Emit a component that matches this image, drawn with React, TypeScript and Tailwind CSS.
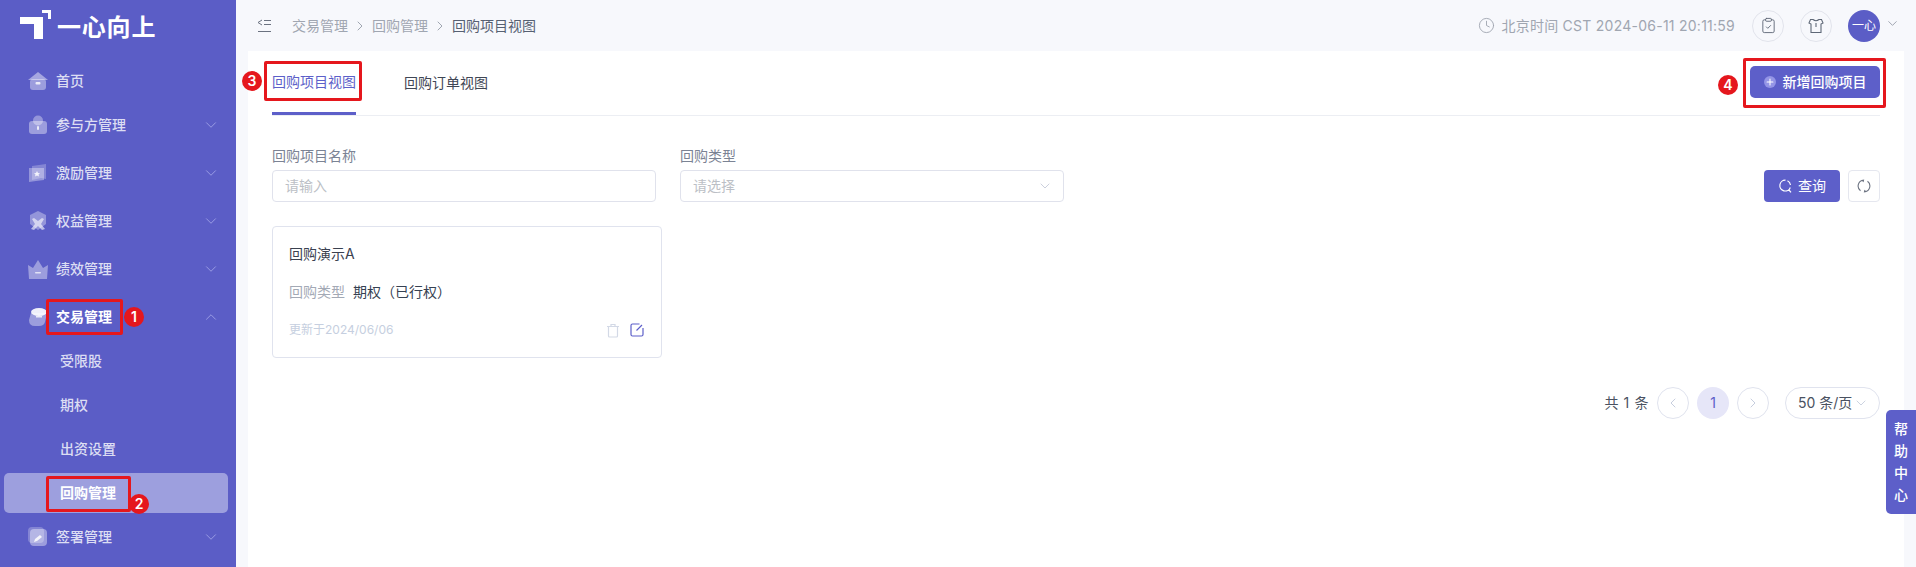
import { ChevronDown, ChevronLeft, ChevronRight, ChevronUp, ClipboardCheck, Clock, Plus } from "lucide-react";
import type { ReactNode } from "react";

const icons: Record<string, ReactNode> = {
  home: (
    <>
      <path d="M10 1 0 9h20z" fill="#fff" opacity=".45" />
      <rect x="2" y="8" width="16" height="11" rx="3" fill="#fff" opacity=".4" />
      <rect x="7.500" y="11" width="5" height="2.500" rx="1" fill="#fff" opacity=".8" />
    </>
  ),
  bag: (
    <>
      <circle cx="10" cy="5.500" r="5" fill="#fff" opacity=".35" />
      <rect x="1" y="6" width="18" height="13" rx="3" fill="#fff" opacity=".4" />
      <rect x="9" y="11" width="2" height="4" rx="1" fill="#fff" opacity=".8" />
    </>
  ),
  flag: (
    <>
      <path d="M4 3 18 1v15l-5-1-9 2z" fill="#fff" opacity=".25" />
      <path d="M1 5h15v12l-8 1-7 1z" fill="#fff" opacity=".35" />
      <path d="m9 8 1 2 2 .2-1.500 1.400.5 2-2-1-2 1 .5-2L6 10.200l2-.2z" fill="#fff" opacity=".85" />
    </>
  ),
  shield: (
    <>
      <path d="m10 0 8 4v9l-8 6-8-6V4z" fill="#fff" opacity=".35" />
      <path d="m6 7 4 3 4-3 2 1-3 5 4 5-3 1-4-4-4 4-3-1 4-5-3-5z" fill="#fff" opacity=".6" />
    </>
  ),
  crown: (
    <>
      <path d="m0 6 5 3 5-8 5 8 5-3-1 14H1z" fill="#fff" opacity=".4" />
      <rect x="7" y="13" width="6" height="1.500" rx=".7" fill="#fff" opacity=".7" />
    </>
  ),
  cup: (
    <>
      <ellipse cx="11" cy="5" rx="8" ry="4" fill="#fff" opacity=".9" />
      <path d="M3 6h16l-2 9q-1 4-6 4H7q-6 0-6-6z" fill="#fff" opacity=".4" />
      <rect x="8" y="9" width="6" height="1.500" fill="#fff" opacity=".8" />
    </>
  ),
  sign: (
    <>
      <rect x="0" y="0" width="16" height="16" rx="4" fill="#fff" opacity=".25" />
      <rect x="2" y="2" width="17" height="17" rx="4" fill="#fff" opacity=".4" />
      <path d="m6 15 1-3 5-4 2 2-5 4z" fill="#fff" opacity=".85" />
    </>
  ),
};

const MenuItem = ({ icon, label, expanded, current }: { icon: string; label: string; expanded?: boolean; current?: boolean }) => (
  <div className="flex h-12 items-center pl-7 pr-[16px]">
    <svg viewBox="0 0 20 20" className="mr-2 h-5 w-5 shrink-0">
      {icons[icon]}
    </svg>
    <span className={current ? "flex-1 text-sm font-semibold text-white" : "flex-1 text-sm font-medium text-[#dcddf3]"}>{label}</span>
    {expanded ? <ChevronUp className="h-[18px] w-[18px] text-[#9a9ce4]" strokeWidth={1.300} /> : <ChevronDown className="h-[18px] w-[18px] text-[#9a9ce4]" strokeWidth={1.300} />}
  </div>
);

const SubItem = ({ label, active }: { label: string; active?: boolean }) => (
  <div className={active ? "ml-1 mr-2 flex h-10 items-center rounded-[5px] bg-[#9d9fde] pl-[56px] text-sm font-semibold text-white" : "ml-1 mr-2 flex h-10 items-center pl-[56px] text-sm font-medium text-[#dcddf3]"}>{label}</div>
);

const Sidebar = () => (
  <aside className="flex w-[236px] shrink-0 flex-col bg-[#5b5dc6]">
    <div className="flex h-[57px] items-start pl-5 pt-[9px]">
      <svg viewBox="0 0 32 30" className="h-[30px] w-8 shrink-0">
        <path d="M0 8h23v22h-9V15H0z" fill="#fff" />
        <path d="M22 1h9v9h-3V4h-6z" fill="#fff" />
      </svg>
      <span className="ml-[5px] mt-[5px] text-2xl leading-[28px] font-bold tracking-[0.8px] text-white">一心向上</span>
    </div>
    <div className="mt-[4px] flex flex-col">
      <div className="flex h-10 items-center pl-7">
        <svg viewBox="0 0 20 20" className="mr-2 h-5 w-5 shrink-0">
          {icons.home}
        </svg>
        <span className="text-sm font-medium text-[#dcddf3]">首页</span>
      </div>
      <MenuItem icon="bag" label="参与方管理" />
      <MenuItem icon="flag" label="激励管理" />
      <MenuItem icon="shield" label="权益管理" />
      <MenuItem icon="crown" label="绩效管理" />
      <MenuItem icon="cup" label="交易管理" expanded current />
      <div className="flex flex-col gap-1">
        <SubItem label="受限股" />
        <SubItem label="期权" />
        <SubItem label="出资设置" />
        <SubItem label="回购管理" active />
      </div>
      <MenuItem icon="sign" label="签署管理" />
    </div>
  </aside>
);

const Header = () => (
  <header className="flex h-[51px] shrink-0 items-center pl-[21px] pr-4">
    <svg viewBox="0 0 15 14" className="h-[14px] w-[15px] fill-none stroke-[#6b7280]" strokeWidth="1">
      <path d="M5 1 1 3.500 5 6M7 1.500h7M7 5.500h7M1 12.500h13" />
    </svg>
    <div className="ml-5 flex items-center text-sm text-[#a0a6b1]">
      <span>交易管理</span>
      <ChevronRight className="mx-1 h-4 w-4" strokeWidth={1.500} />
      <span>回购管理</span>
      <ChevronRight className="mx-1 h-4 w-4" strokeWidth={1.500} />
      <span className="text-[#566072]">回购项目视图</span>
    </div>
    <div className="ml-auto flex items-center text-sm text-[#a0a6b1]">
      <Clock className="mr-[6px] h-[17px] w-[17px]" strokeWidth={1.300} />
      <span className="tracking-[0.25px]">北京时间 CST 2024-06-11 20:11:59</span>
    </div>
    <div className="ml-[17px] flex h-8 w-8 items-center justify-center rounded-full border border-[#e2e4ec]">
      <ClipboardCheck className="h-[17px] w-[17px] text-[#5f6877]" strokeWidth={1.300} />
    </div>
    <div className="ml-4 flex h-8 w-8 items-center justify-center rounded-full border border-[#e2e4ec]">
      <svg viewBox="0 0 16 16" className="h-4 w-4 fill-none stroke-[#5f6877]" strokeWidth="1.100">
        <path d="M5 1.500H2.500L1 5l2 1v8.500h10V6l2-1-1.500-3.500H11Q8 4 5 1.500z" />
        <path d="M8 5v4" />
      </svg>
    </div>
    <div className="ml-4 flex h-8 w-8 items-center justify-center rounded-full bg-[#5b5dc6] text-xs text-white">一心</div>
    <ChevronDown className="ml-[5px] mb-[5px] h-[15px] w-[15px] text-[#8d93a0]" strokeWidth={1.300} />
  </header>
);

const Filters = () => (
  <div className="mt-[30px] flex items-end gap-6">
    <label className="flex w-[384px] flex-col gap-1 text-sm text-[#7b8394]">
      <span className="leading-5">回购项目名称</span>
      <div className="flex h-8 items-center rounded-[4px] border border-[#e0e2ec] px-3 text-[#bcbfc6]">请输入</div>
    </label>
    <label className="flex w-[384px] flex-col gap-1 text-sm text-[#7b8394]">
      <span className="leading-5">回购类型</span>
      <div className="flex h-8 items-center justify-between rounded-[4px] border border-[#e0e2ec] pl-3 pr-[10px] text-[#bcbfc6]">
        请选择
        <ChevronDown className="h-4 w-4 text-[#b9bfd0]" strokeWidth={1.100} />
      </div>
    </label>
    <div className="ml-auto flex items-center gap-2">
      <button className="flex h-8 w-[76px] items-center justify-center gap-[6px] rounded-[4px] bg-[#5d5fc9] text-sm text-white">
        <svg viewBox="0 0 14 14" className="h-[14px] w-[14px] fill-none stroke-white" strokeWidth="1.200">
          <path d="M7.500 1.200a5.400 5.400 0 1 0 4.800 7.300M9.500 1.800a5.400 5.400 0 0 1 3 4.200M10.500 10.500l2.500 2.800" />
        </svg>
        查询
      </button>
      <button className="flex h-8 w-8 items-center justify-center rounded-[4px] border border-[#e5e7ef]">
        <svg viewBox="0 0 14 14" className="h-[14px] w-[14px] fill-none stroke-[#6b7280]" strokeWidth="1.100">
          <path d="M6 1.300A5.800 5.800 0 0 0 3.500 11.700M8 12.700A5.800 5.800 0 0 0 10.500 2.300M4.500 1.500 6.500 1.200 6 3M9.500 12.500 7.500 12.800 8 11" />
        </svg>
      </button>
    </div>
  </div>
);

const Card = () => (
  <div className="mt-6 flex h-[132px] w-[390px] flex-col rounded-[4px] border border-[#e0e3ee] px-4 pt-[17px]">
    <div className="text-sm leading-5 text-[#3a4150]">回购演示A</div>
    <div className="mt-[18px] flex text-sm leading-5">
      <span className="text-[#a3a9b5]">回购类型</span>
      <span className="ml-2 text-[#364152]">期权（已行权）</span>
    </div>
    <div className="mt-5 flex items-center pr-[1px]">
      <span className="text-xs leading-4 text-[#c6cfe0]">更新于2024/06/06</span>
      <svg viewBox="0 0 14 15" className="ml-auto h-[15px] w-[14px] fill-none stroke-[#d3d9e6]" strokeWidth="1.200">
        <path d="M1 3.500h12M5 3.500V1.500h4v2M2.500 3.500V13q0 1 1 1h7q1 0 1-1V3.500" />
      </svg>
      <svg viewBox="0 0 14 14" className="ml-[10px] h-[14px] w-[14px] fill-none stroke-[#5d5fc9]" strokeWidth="1.200">
        <path d="M9.500 1H2.500Q1 1 1 2.500v9Q1 13 2.500 13h9q1.500 0 1.500-1.500V5M6.500 7.500 12 2" />
      </svg>
    </div>
  </div>
);

const Pagination = () => (
  <div className="mt-[29px] flex items-center justify-end text-sm text-[#4a5261]">
    <span className="tracking-[0.6px]">共 1 条</span>
    <div className="ml-2 flex h-8 w-8 items-center justify-center rounded-full border border-[#e0e3ee] text-[#b9c2d6]">
      <ChevronLeft className="h-4 w-4" strokeWidth={1.200} />
    </div>
    <div className="ml-2 flex h-8 w-8 items-center justify-center rounded-full bg-[#e6e6f8] text-[#5d5fc9]">1</div>
    <div className="ml-2 flex h-8 w-8 items-center justify-center rounded-full border border-[#e0e3ee] text-[#b9c2d6]">
      <ChevronRight className="h-4 w-4" strokeWidth={1.200} />
    </div>
    <div className="ml-4 flex h-8 w-[95px] items-center justify-between rounded-full border border-[#e0e3ee] pl-3 pr-[10px]">
      50 条/页
      <ChevronDown className="h-4 w-4 text-[#b9c2d6]" strokeWidth={1.100} />
    </div>
  </div>
);

const Note = ({ children, className }: { children: string; className: string }) => (
  <div className={`absolute flex h-5 w-5 items-center justify-center rounded-full bg-[#e5171d] text-sm font-semibold text-white ${className}`}>{children}</div>
);

const Frame = ({ className }: { className: string }) => <div className={`absolute rounded-[2px] border-[3px] border-[#e5171d] ${className}`} />;

export default function App() {
  return (
    <div className="relative flex h-[567px] w-[1916px] overflow-hidden bg-[#f7f8fc] font-['Inter','Noto_Sans_CJK_SC',sans-serif]">
      <Sidebar />
      <main className="flex min-w-0 flex-1 flex-col">
        <Header />
        <section className="ml-3 mr-3 flex-1 bg-white px-6">
          <div className="flex h-[65px] items-center border-b border-[#eceef3]">
            <div className="mb-px flex h-full w-[84px] items-center border-b-[3px] border-[#5d5fc9] pt-[1px] text-sm text-[#5d5fc9]">回购项目视图</div>
            <div className="ml-[48px] mb-[1px] text-sm text-[#3f4654]">回购订单视图</div>
            <button className="ml-auto mb-[3px] flex h-8 w-[130px] items-center justify-center gap-[7px] rounded-[5px] bg-[#5d5fc9] text-sm font-medium text-white">
              <span className="flex h-3 w-3 items-center justify-center rounded-full bg-[#9495e6]">
                <Plus className="h-[10px] w-[10px]" strokeWidth={2.500} />
              </span>
              新增回购项目
            </button>
          </div>
          <Filters />
          <Card />
          <Pagination />
        </section>
      </main>

      <div className="absolute left-[1886px] top-[410px] flex h-[104px] w-[30px] flex-col items-center justify-center gap-[2px] rounded-l-[5px] bg-[#5d5fc9] text-sm leading-5 font-medium text-white">
        <span>帮</span>
        <span>助</span>
        <span>中</span>
        <span>心</span>
      </div>

      <Frame className="left-[46px] top-[299px] h-9 w-[77px]" />
      <Note className="left-[124px] top-[307px]">1</Note>
      <Frame className="left-[46px] top-[476px] h-9 w-[85px]" />
      <Note className="left-[129px] top-[494px]">2</Note>
      <Frame className="left-[264px] top-[61px] h-10 w-[98px]" />
      <Note className="left-[242px] top-[71px]">3</Note>
      <Frame className="left-[1743px] top-[58px] h-[50px] w-[143px]" />
      <Note className="left-[1718px] top-[75px]">4</Note>
    </div>
  );
}
